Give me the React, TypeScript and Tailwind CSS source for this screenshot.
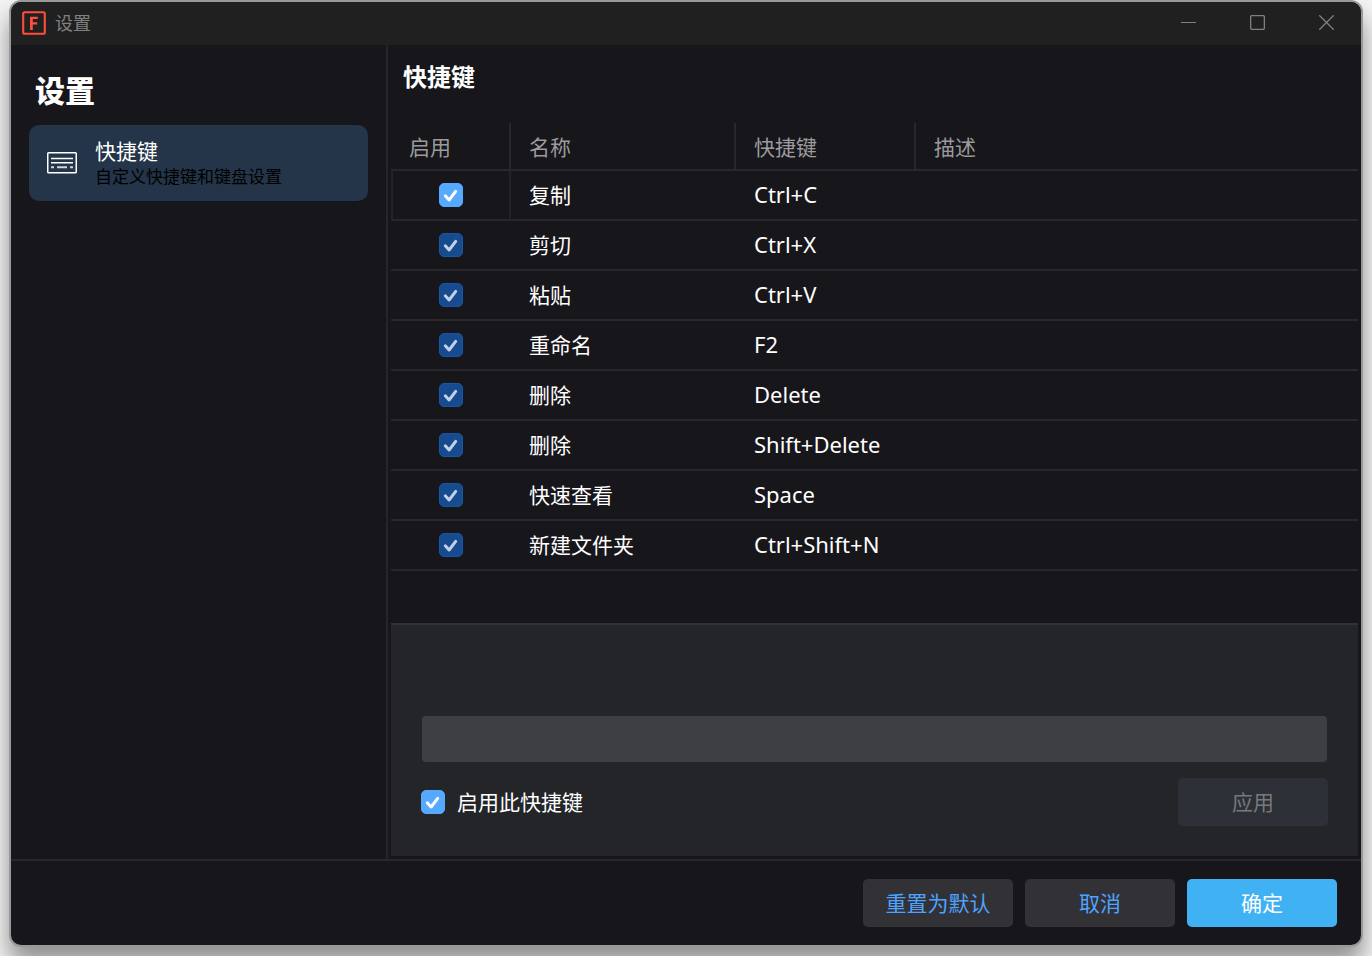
import { useState } from "react";

type Shortcut = { name: string; keys: string; description: string };

const shortcuts: Shortcut[] = [
  { name: "复制", keys: "Ctrl+C", description: "" },
  { name: "剪切", keys: "Ctrl+X", description: "" },
  { name: "粘贴", keys: "Ctrl+V", description: "" },
  { name: "重命名", keys: "F2", description: "" },
  { name: "删除", keys: "Delete", description: "" },
  { name: "删除", keys: "Shift+Delete", description: "" },
  { name: "快速查看", keys: "Space", description: "" },
  { name: "新建文件夹", keys: "Ctrl+Shift+N", description: "" },
];

function Check({
  id,
  label,
  checked,
  bright,
  onToggle,
}: {
  id: string;
  label?: string;
  checked: boolean;
  bright: boolean;
  onToggle: () => void;
}) {
  const fill = bright ? "checked:bg-[#55a9ff] checked:border-[#55a9ff]" : "checked:bg-[#174b8f] checked:border-[#1a559f]";
  return (
    <span className="inline-grid size-6 shrink-0 align-top">
      <input
        id={id}
        type="checkbox"
        aria-label={label}
        checked={checked}
        onChange={onToggle}
        className={`col-start-1 row-start-1 size-6 appearance-none rounded-[5px] border border-[#6b6b70] ${fill}`}
      />
      {checked && (
        <svg viewBox="0 0 24 24" className="pointer-events-none col-start-1 row-start-1 size-6" aria-hidden="true">
          <path
            d="M6.3 12.8 L10.1 17 L16.7 8.4"
            fill="none"
            stroke={bright ? "#ffffff" : "#c3cfe4"}
            strokeWidth="3"
            strokeLinecap="round"
            strokeLinejoin="round"
          />
        </svg>
      )}
    </span>
  );
}

function TitleBar() {
  return (
    <header className="flex h-[43px] shrink-0 items-center bg-[#202020] pb-[2px] pl-[11px] text-[#808080]">
      <svg width="24" height="24" viewBox="0 0 24 24" aria-hidden="true">
        <rect x="1.2" y="1.2" width="21.6" height="21.6" rx="1.5" fill="none" stroke="#ff4d3d" strokeWidth="2.1" />
        <path d="M8 5.8h7.8v2.3h-5v3.1h4.4v2.4h-4.4v5.4H8z" fill="#ff4d3d" />
      </svg>
      <span className="ml-[9px] text-[18px] leading-6">设置</span>
      <div className="ml-auto flex h-full">
        <button type="button" aria-label="最小化" className="grid w-[70px] place-items-center">
          <svg width="15" height="15" viewBox="0 0 15 15" fill="none" stroke="#808080">
            <path d="M0 7.5h15" />
          </svg>
        </button>
        <button type="button" aria-label="最大化" className="grid w-[68px] place-items-center">
          <svg width="15" height="15" viewBox="0 0 15 15" fill="none" stroke="#808080" strokeWidth="1.3">
            <rect x="0.65" y="0.65" width="13.7" height="13.7" rx="1" />
          </svg>
        </button>
        <button type="button" aria-label="关闭" className="grid w-[70px] place-items-center">
          <svg width="15" height="15" viewBox="0 0 15 15" fill="none" stroke="#808080" strokeWidth="1.3">
            <path d="M0.3 0.3l14.4 14.4M14.7 0.3L0.3 14.7" />
          </svg>
        </button>
      </div>
    </header>
  );
}

function Sidebar() {
  return (
    <aside className="w-[377px] shrink-0 border-r-2 border-[#26262a] pr-[18px] pl-[18px]">
      <h1 className="mt-6 pl-[6px] text-[30px] leading-[44px] font-black text-white">设置</h1>
      <nav className="mt-3">
        <a href="#shortcuts" className="flex h-[76px] items-center rounded-[10px] bg-[#243449] pl-[18px]">
          <svg width="30" height="22" viewBox="0 0 30 22" fill="none" stroke="#ffffff" aria-hidden="true">
            <rect x="0.75" y="0.75" width="28.5" height="20" rx="0.8" strokeWidth="1.5" />
            <path d="M4 6.5h22M4 10.8h22" strokeWidth="1.4" />
            <path d="M4 15.2h3M10 15.2h10M23 15.2h3" strokeWidth="1.9" stroke="#d0d5dc" />
          </svg>
          <span className="ml-[18px] flex flex-col pt-0.5">
            <span className="text-[21px] leading-[26px] text-white">快捷键</span>
            <span className="text-[17px] leading-[26px] text-black">自定义快捷键和键盘设置</span>
          </span>
        </a>
      </nav>
    </aside>
  );
}

export default function App() {
  const [enabled, setEnabled] = useState(() => shortcuts.map(() => true));
  const [current, setCurrent] = useState(true);
  const [keys, setKeys] = useState("");
  const th = "border-b-2 border-[#28282c] px-[18px] pt-[3px] text-left font-normal";
  const td = "border-b-2 border-[#28282c] px-[18px]";

  return (
    <div className="flex min-h-screen bg-[#f4f4f4] px-[11px] pt-[2px] pb-[11px] font-['Noto_Sans','Noto_Sans_CJK_SC',sans-serif] text-[21px] text-white">
      <div className="flex grow flex-col overflow-hidden rounded-[10px] bg-[#17161b] shadow-[0_0_0_2px_#999999,0_16px_24px_2px_rgba(0,0,0,0.42)]">
        <TitleBar />
        <div className="flex grow">
          <Sidebar />
          <main className="flex min-w-0 grow flex-col px-[3px] pb-[3px]">
            <h2 className="mt-4 pl-3 text-[24px] leading-8 font-bold">快捷键</h2>
            <table className="mt-[30px] w-full table-fixed border-separate border-spacing-0">
              <thead>
                <tr className="h-12 text-[#9b9b9d]">
                  <th className={`${th} w-[120px] border-r-2`}>启用</th>
                  <th className={`${th} w-[225px] border-r-2`}>名称</th>
                  <th className={`${th} w-[180px] border-r-2`}>快捷键</th>
                  <th className={th}>描述</th>
                </tr>
              </thead>
              <tbody>
                {shortcuts.map((s, i) => (
                  <tr key={s.keys} className="h-[50px]">
                    <td
                      className={
                        i === 0
                          ? "border-2 border-t-0 border-x-[#232327] border-b-[#28282c] text-center leading-6"
                          : "border-b-2 border-[#28282c] text-center leading-6"
                      }
                    >
                      <Check
                        id={`shortcut-${i}`}
                        label={`${s.name} ${s.keys}`}
                        checked={enabled[i]}
                        bright={i === 0}
                        onToggle={() => setEnabled(enabled.map((v, j) => (j === i ? !v : v)))}
                      />
                    </td>
                    <td className={`${td} pt-0.5`}>{s.name}</td>
                    <td className={`${td} pb-0.5 text-[22px] whitespace-nowrap`}>{s.keys}</td>
                    <td className={td}>{s.description}</td>
                  </tr>
                ))}
              </tbody>
            </table>
            <section className="mt-auto border-t-2 border-[#323236] bg-[#242529] px-[30px] pt-[90px] pb-[30px]">
              <input
                type="text"
                aria-label="快捷键"
                value={keys}
                onChange={(e) => setKeys(e.target.value)}
                className="block h-12 w-full rounded-[5px] border border-transparent bg-[#3e3f42] bg-clip-padding px-3"
              />
              <div className="mt-[15px] flex h-12 items-center justify-between">
                <div className="flex items-center gap-3">
                  <Check id="current-enabled" checked={current} bright onToggle={() => setCurrent(!current)} />
                  <label htmlFor="current-enabled" className="pt-0.5">
                    启用此快捷键
                  </label>
                </div>
                <button type="button" disabled className="h-12 w-[150px] rounded-[5px] bg-[#2e3038] pt-0.5 text-[#77797c]">
                  应用
                </button>
              </div>
            </section>
          </main>
        </div>
        <footer className="flex justify-end gap-3 border-t-2 border-[#28282c] py-[18px] pr-6">
          <button type="button" className="h-12 w-[150px] rounded-[5px] bg-[#323136] pt-0.5 text-[#4ea3ff]">
            重置为默认
          </button>
          <button type="button" className="h-12 w-[150px] rounded-[5px] bg-[#323136] pt-0.5 text-[#4ea3ff]">
            取消
          </button>
          <button type="button" className="h-12 w-[150px] rounded-[5px] bg-[#40b2f3] pt-0.5 text-white">
            确定
          </button>
        </footer>
      </div>
    </div>
  );
}
